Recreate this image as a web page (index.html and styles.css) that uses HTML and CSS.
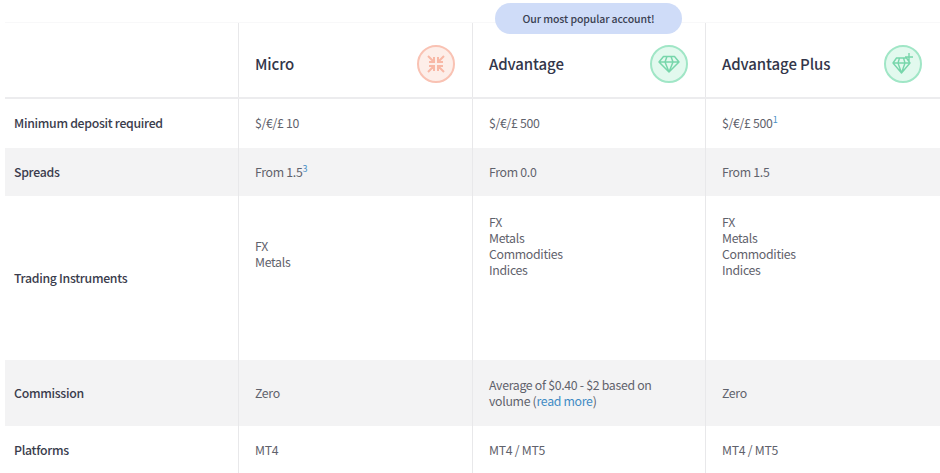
FILE: index.html
```html
<!DOCTYPE html>
<html lang="en">
<head>
<meta charset="utf-8">
<title>Account comparison</title>
<link rel="stylesheet" href="styles.css">
</head>
<body>
<div class="compare">
  <div class="row head">
    <div class="cell label"></div>
    <div class="cell acct"><span class="name">Micro</span>
      <span class="badge-icon orange">
        <svg viewBox="0 0 20 20" width="20" height="20" fill="none" stroke="#f8b8a6" stroke-width="2"><path d="M2 2l5.500 5.500M3 8h5V3M18 2l-5.500 5.500M17 8h-5V3M2 18l5.500-5.500M3 12h5v5M18 18l-5.500-5.500M17 12h-5v5"/></svg>
      </span>
    </div>
    <div class="cell acct popular"><span class="name">Advantage</span>
      <span class="pill">Our most popular account!</span>
      <span class="badge-icon green">
        <svg viewBox="0 0 24 20" width="24" height="20" fill="none" stroke="#77d6ab" stroke-width="1.500" stroke-linejoin="round"><path d="M6.500 2.500h11l4.500 5.500-10 10L2 8zM2 8h20M8 8l4 10 4-10M8 8l2-5.500M16 8l-2-5.500"/></svg>
      </span>
    </div>
    <div class="cell acct"><span class="name">Advantage Plus</span>
      <span class="badge-icon green">
        <svg viewBox="0 0 24 24" width="24" height="24" fill="none" stroke="#77d6ab" stroke-width="1.400" stroke-linejoin="round"><path d="M5.500 6h10l3.500 5-8.500 10L2 11zM2 11h17M7 11l3.500 10L14 11M7 11l1.500-5M14 11l-1.500-5M18 1v8M14 5h8"/></svg>
      </span>
    </div>
  </div>
  <div class="row r1">
    <div class="cell label">Minimum deposit required</div>
    <div class="cell">$/€/£ 10</div>
    <div class="cell">$/€/£ 500</div>
    <div class="cell"><span>$/€/£ 500<sup class="note">1</sup></span></div>
  </div>
  <div class="row r2 shade">
    <div class="cell label">Spreads</div>
    <div class="cell"><span>From 1.5<sup class="note">3</sup></span></div>
    <div class="cell">From 0.0</div>
    <div class="cell">From 1.5</div>
  </div>
  <div class="row r3">
    <div class="cell label">Trading Instruments</div>
    <div class="cell top-micro"><span>FX<br>Metals</span></div>
    <div class="cell top"><span>FX<br>Metals<br>Commodities<br>Indices</span></div>
    <div class="cell top"><span>FX<br>Metals<br>Commodities<br>Indices</span></div>
  </div>
  <div class="row r4 shade">
    <div class="cell label">Commission</div>
    <div class="cell">Zero</div>
    <div class="cell"><span>Average of $0.40 - $2 based on volume (<a href="#">read more</a>)</span></div>
    <div class="cell">Zero</div>
  </div>
  <div class="row r5">
    <div class="cell label">Platforms</div>
    <div class="cell">MT4</div>
    <div class="cell">MT4 / MT5</div>
    <div class="cell">MT4 / MT5</div>
  </div>
</div>
</body>
</html>
```
FILE: styles.css
```css
* { box-sizing: border-box; }
html, body { margin: 0; padding: 0; background: #fff; overflow: hidden; }
body {
  height: 473px;
  padding: 22px 0 0 5px;
  font-family: "Noto Sans CJK SC", "Noto Sans", sans-serif;
  font-size: 12.300px;
  line-height: 16px;
  letter-spacing: -0.300px;
  color: #5f626c;
}
.compare { width: 935px; }
.row {
  display: grid;
  grid-template-columns: 233px 234px 233px 235px;
}
.head { height: 77px; border-bottom: 2px solid #ececee; border-top: 1px solid #f8f8f9; }
.r1 { height: 49px; }
.r2 { height: 48px; }
.r3 { height: 164px; }
.r4 { height: 66px; }
.r5 { height: 47px; }
.shade { background: #f3f3f4; }
.cell {
  display: flex;
  align-items: center;
  padding: 0 30px 0 16px;
  border-left: 1px solid #e8e8ea;
}
.r1 .cell { padding-bottom: 2px; }
.cell.label {
  border-left: 0;
  padding-left: 9px;
  padding-right: 9px;
  font-weight: 500;
  color: #3a3c4c;
}
.cell.top { align-items: flex-start; padding-top: 18px; }
.cell.top-micro { padding-bottom: 48px; }
.acct {
  position: relative;
  justify-content: space-between;
  padding: 7px 17px 0 16px;
}
.acct:last-child { padding-right: 18px; }
.name {
  font-size: 15px;
  font-weight: 500;
  color: #33364a;
  letter-spacing: -0.100px;
}
.badge-icon {
  width: 38px;
  height: 38px;
  border-radius: 50%;
  display: flex;
  align-items: center;
  justify-content: center;
  flex: none;
}
.orange { background: #fdeee9; border: 2px solid #f9c2b3; }
.green { background: #e2f9ee; border: 2px solid #a0e6c6; }
.pill {
  position: absolute;
  top: -20px;
  left: 22px;
  width: 187px;
  height: 31px;
  border-radius: 16px;
  background: #cfdcf8;
  color: #3a3f52;
  font-size: 10.500px;
  font-weight: 500;
  letter-spacing: -0.100px;
  display: flex;
  align-items: center;
  justify-content: center;
}
sup.note {
  font-size: 9px;
  line-height: 0;
  color: #4a90c6;
  vertical-align: baseline;
  position: relative;
  top: -5px;
}
a { color: #3f8bc4; text-decoration: none; }
```
